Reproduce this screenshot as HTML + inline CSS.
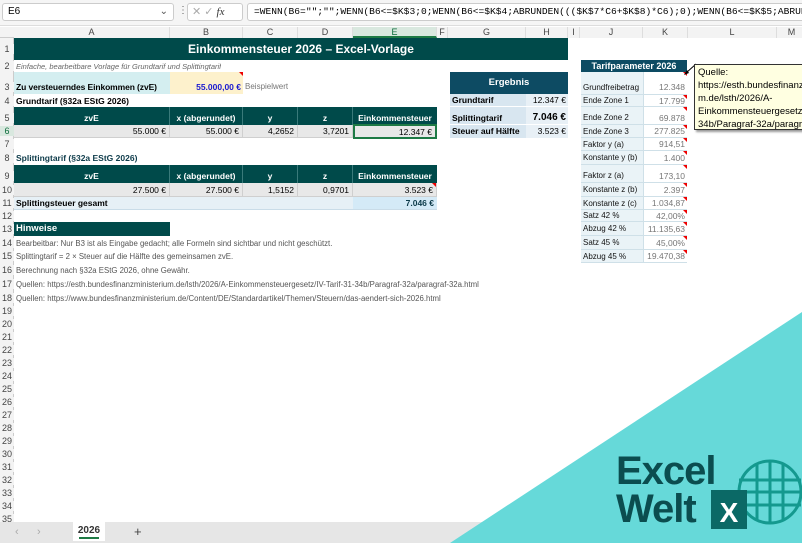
<!DOCTYPE html>
<html><head><meta charset="utf-8"><style>
*{margin:0;padding:0;box-sizing:border-box}
body{width:802px;height:543px;overflow:hidden;background:#fff;font-family:"Liberation Sans",sans-serif;font-size:8.5px;color:#000;position:relative}
.a{position:absolute;white-space:nowrap;overflow:hidden}
.ch{position:absolute;top:27px;height:11px;font-size:9px;color:#444;text-align:center;line-height:11px;border-right:1px solid #ddd;background:#f3f3f3}
.rh{position:absolute;left:0;width:14px;font-size:9px;color:#444;text-align:center;background:#f3f3f3}
.dk{background:#004a4a;color:#fff;font-weight:bold;text-align:center;font-size:8.5px}
.bl{background:#0d4b63;color:#fff;font-weight:bold;text-align:center}
.g{background:#e8e8e8;border-right:1px solid #cfcfcf;border-bottom:1px solid #cfcfcf;text-align:right;padding-right:3px}
.tri{position:absolute;width:0;height:0;border-top:4px solid #e00;border-left:4px solid transparent}
.j{background:#eaf3f7;border-bottom:1px solid #cfe0e8;padding-left:2px;color:#111}
.k{background:#fff;border-bottom:1px solid #cfe0e8;text-align:right;padding-right:2px;color:#777;border-left:1px solid #cfe0e8}
.n{color:#555;font-size:7.8px}
</style></head><body>
<div class="a" style="left:0;top:0;width:802px;height:26px;background:#f5f5f5;border-bottom:1px solid #ddd"></div>
<div class="a" style="left:2px;top:3px;width:172px;height:18px;background:#fff;border:1px solid #ccc;border-radius:3px;font-size:10px;line-height:16px;padding-left:5px">E6<span style="position:absolute;right:5px;color:#555">⌄</span></div>
<div class="a" style="left:178px;top:5px;font-size:10px;color:#666">⋮</div>
<div class="a" style="left:187px;top:3px;width:56px;height:18px;background:#fff;border:1px solid #ccc;border-radius:3px;font-size:11px;line-height:16px;color:#aaa;padding-left:4px">✕ ✓ <i style="color:#333;font-family:'Liberation Serif',serif">fx</i></div>
<div class="a" style="left:247px;top:3px;width:560px;height:18px;background:#fff;border:1px solid #ccc;border-radius:3px;font-family:'Liberation Mono',monospace;font-size:9.6px;line-height:16px;padding-left:6px">=WENN(B6="";"";WENN(B6&lt;=$K$3;0;WENN(B6&lt;=$K$4;ABRUNDEN((($K$7*C6+$K$8)*C6);0);WENN(B6&lt;=$K$5;ABRUNDEN((($K$</div>
<div class="a" style="left:0;top:27px;width:802px;height:11px;background:#f3f3f3;border-bottom:1px solid #ccc"></div>
<div class="ch" style="left:14px;width:156px">A</div><div class="ch" style="left:170px;width:73px">B</div><div class="ch" style="left:243px;width:55px">C</div><div class="ch" style="left:298px;width:55px">D</div><div class="ch" style="left:353px;width:84px;background:#d9e8df;color:#0a6b3a;border-bottom:2px solid #1e7a45">E</div><div class="ch" style="left:437px;width:11px">F</div><div class="ch" style="left:448px;width:78px">G</div><div class="ch" style="left:526px;width:42px">H</div><div class="ch" style="left:568px;width:12px">I</div><div class="ch" style="left:580px;width:63px">J</div><div class="ch" style="left:643px;width:45px">K</div><div class="ch" style="left:688px;width:89px">L</div><div class="ch" style="left:777px;width:30px">M</div>
<div class="a" style="left:0;top:38px;width:14px;height:485px;background:#f3f3f3;border-right:1px solid #ccc"></div>
<div class="rh" style="top:44px">1</div><div class="rh" style="top:61px">2</div><div class="rh" style="top:82px">3</div><div class="rh" style="top:96px">4</div><div class="rh" style="top:113px">5</div><div class="rh" style="top:126px;color:#0a6b3a;background:#d9e8df">6</div><div class="rh" style="top:139px">7</div><div class="rh" style="top:153px">8</div><div class="rh" style="top:171px">9</div><div class="rh" style="top:185px">10</div><div class="rh" style="top:198px">11</div><div class="rh" style="top:211px">12</div><div class="rh" style="top:224px">13</div><div class="rh" style="top:238px">14</div><div class="rh" style="top:251px">15</div><div class="rh" style="top:265px">16</div><div class="rh" style="top:279px">17</div><div class="rh" style="top:293px">18</div>
<div class="rh" style="top:306px">19</div><div class="rh" style="top:319px">20</div><div class="rh" style="top:332px">21</div><div class="rh" style="top:345px">22</div><div class="rh" style="top:358px">23</div><div class="rh" style="top:371px">24</div><div class="rh" style="top:384px">25</div><div class="rh" style="top:397px">26</div><div class="rh" style="top:410px">27</div><div class="rh" style="top:423px">28</div><div class="rh" style="top:436px">29</div><div class="rh" style="top:449px">30</div><div class="rh" style="top:462px">31</div><div class="rh" style="top:475px">32</div><div class="rh" style="top:488px">33</div><div class="rh" style="top:501px">34</div><div class="rh" style="top:514px">35</div>
<div class="a dk" style="left:14px;top:38px;width:554px;height:22px;font-size:12px;line-height:22px;padding-left:20px">Einkommensteuer 2026 – Excel-Vorlage</div>
<div class="a" style="left:16px;top:61px;font-size:7.5px;font-style:italic;color:#666;line-height:11px">Einfache, bearbeitbare Vorlage für Grundtarif und Splittingtarif</div>
<div class="a" style="left:14px;top:72px;width:156px;height:22px;background:#d4eef0;font-weight:bold;line-height:30px;padding-left:2px;font-size:8.5px;letter-spacing:-0.1px">Zu versteuerndes Einkommen (zvE)</div>
<div class="a" style="left:170px;top:72px;width:73px;height:22px;background:#fdf1cc;color:#1a1ad0;font-weight:bold;text-align:right;line-height:30px;padding-right:2px">55.000,00 €</div>
<div class="tri" style="left:239px;top:72px"></div>
<div class="a" style="left:245px;top:82px;color:#777;font-size:8px">Beispielwert</div>
<div class="a" style="left:16px;top:96px;font-weight:bold">Grundtarif (§32a EStG 2026)</div>
<div class="a dk" style="left:14px;top:107px;width:156px;height:18px;line-height:22px;border-right:1px solid #3a7a7a">zvE</div>
<div class="a dk" style="left:170px;top:107px;width:73px;height:18px;line-height:22px;border-right:1px solid #3a7a7a">x (abgerundet)</div>
<div class="a dk" style="left:243px;top:107px;width:55px;height:18px;line-height:22px;border-right:1px solid #3a7a7a">y</div>
<div class="a dk" style="left:298px;top:107px;width:55px;height:18px;line-height:22px;border-right:1px solid #3a7a7a">z</div>
<div class="a dk" style="left:353px;top:107px;width:84px;height:18px;line-height:22px">Einkommensteuer</div>
<div class="a g" style="left:14px;top:125px;width:156px;height:13px;line-height:13px">55.000 €</div>
<div class="a g" style="left:170px;top:125px;width:73px;height:13px;line-height:13px">55.000 €</div>
<div class="a g" style="left:243px;top:125px;width:55px;height:13px;line-height:13px">4,2652</div>
<div class="a g" style="left:298px;top:125px;width:55px;height:13px;line-height:13px">3,7201</div>
<div class="a g" style="left:353px;top:124px;width:84px;height:15px;line-height:13px;border:2px solid #1e7a45">12.347 €</div>
<div class="a" style="left:16px;top:153px;font-weight:bold;color:#0d3b4a">Splittingtarif (§32a EStG 2026)</div>
<div class="a dk" style="left:14px;top:165px;width:156px;height:18px;line-height:22px;border-right:1px solid #3a7a7a">zvE</div>
<div class="a dk" style="left:170px;top:165px;width:73px;height:18px;line-height:22px;border-right:1px solid #3a7a7a">x (abgerundet)</div>
<div class="a dk" style="left:243px;top:165px;width:55px;height:18px;line-height:22px;border-right:1px solid #3a7a7a">y</div>
<div class="a dk" style="left:298px;top:165px;width:55px;height:18px;line-height:22px;border-right:1px solid #3a7a7a">z</div>
<div class="a dk" style="left:353px;top:165px;width:84px;height:18px;line-height:22px">Einkommensteuer</div>
<div class="a g" style="left:14px;top:183px;width:156px;height:14px;line-height:14px">27.500 €</div>
<div class="a g" style="left:170px;top:183px;width:73px;height:14px;line-height:14px">27.500 €</div>
<div class="a g" style="left:243px;top:183px;width:55px;height:14px;line-height:14px">1,5152</div>
<div class="a g" style="left:298px;top:183px;width:55px;height:14px;line-height:14px">0,9701</div>
<div class="a g" style="left:353px;top:183px;width:84px;height:14px;line-height:14px">3.523 €</div>
<div class="tri" style="left:432px;top:183px"></div>
<div class="a" style="left:14px;top:197px;width:339px;height:13px;background:#e6f0f6;border-bottom:1px solid #c9dce8;font-weight:bold;line-height:13px;padding-left:2px">Splittingsteuer gesamt</div>
<div class="a" style="left:353px;top:197px;width:84px;height:13px;background:#d4eaf7;border-bottom:1px solid #c9dce8;font-weight:bold;color:#0d3b4a;text-align:right;line-height:13px;padding-right:3px">7.046 €</div>
<div class="a dk" style="left:14px;top:222px;width:156px;height:14px;text-align:left;padding-left:2px;line-height:14px;font-size:9.5px">Hinweise</div>
<div class="a n" style="left:16px;top:239px">Bearbeitbar: Nur B3 ist als Eingabe gedacht; alle Formeln sind sichtbar und nicht geschützt.</div>
<div class="a n" style="left:16px;top:252px">Splittingtarif = 2 × Steuer auf die Hälfte des gemeinsamen zvE.</div>
<div class="a n" style="left:16px;top:266px">Berechnung nach §32a EStG 2026, ohne Gewähr.</div>
<div class="a n" style="left:16px;top:280px">Quellen: https://esth.bundesfinanzministerium.de/lsth/2026/A-Einkommensteuergesetz/IV-Tarif-31-34b/Paragraf-32a/paragraf-32a.html</div>
<div class="a n" style="left:16px;top:294px">Quellen: https://www.bundesfinanzministerium.de/Content/DE/Standardartikel/Themen/Steuern/das-aendert-sich-2026.html</div>
<div class="a bl" style="left:450px;top:72px;width:118px;height:22px;line-height:22px;font-size:9.5px">Ergebnis</div>
<div class="a" style="left:450px;top:94px;width:76px;height:13px;background:#d8e6f0;font-weight:bold;line-height:13px;padding-left:2px;border-bottom:1px solid #fff">Grundtarif</div>
<div class="a" style="left:526px;top:94px;width:42px;height:13px;background:#e8f0f6;line-height:13px;text-align:right;padding-right:2px;border-bottom:1px solid #fff">12.347 €</div>
<div class="a" style="left:450px;top:107px;width:76px;height:18px;background:#d8e6f0;font-weight:bold;line-height:22px;padding-left:2px;border-bottom:1px solid #fff">Splittingtarif</div>
<div class="a" style="left:526px;top:107px;width:42px;height:18px;background:#e8f0f6;line-height:22px;text-align:right;padding-right:2px;font-weight:bold;font-size:10px;border-bottom:1px solid #fff">7.046 €</div>
<div class="a" style="left:450px;top:125px;width:76px;height:13px;background:#d8e6f0;font-weight:bold;line-height:13px;padding-left:2px">Steuer auf Hälfte</div>
<div class="a" style="left:526px;top:125px;width:42px;height:13px;background:#e8f0f6;line-height:13px;text-align:right;padding-right:2px">3.523 €</div>
<div class="a bl" style="left:581px;top:60px;width:106px;height:12px;line-height:12px;font-size:9px">Tarifparameter 2026</div>
<div class="a j" style="left:581px;top:72px;width:63px;height:23px;line-height:31px;font-size:8px">Grundfreibetrag</div><div class="a k" style="left:643px;top:72px;width:44px;height:23px;line-height:31px">12.348</div>
<div class="a j" style="left:581px;top:95px;width:63px;height:12px;line-height:12px;font-size:8px">Ende Zone 1</div><div class="a k" style="left:643px;top:95px;width:44px;height:12px;line-height:12px">17.799</div>
<div class="a j" style="left:581px;top:107px;width:63px;height:18px;line-height:22px;font-size:8px">Ende Zone 2</div><div class="a k" style="left:643px;top:107px;width:44px;height:18px;line-height:22px">69.878</div>
<div class="a j" style="left:581px;top:125px;width:63px;height:13px;line-height:13px;font-size:8px">Ende Zone 3</div><div class="a k" style="left:643px;top:125px;width:44px;height:13px;line-height:13px">277.825</div>
<div class="a j" style="left:581px;top:138px;width:63px;height:13px;line-height:13px;font-size:8px">Faktor y (a)</div><div class="a k" style="left:643px;top:138px;width:44px;height:13px;line-height:13px">914,51</div>
<div class="a j" style="left:581px;top:151px;width:63px;height:14px;line-height:14px;font-size:8px">Konstante y (b)</div><div class="a k" style="left:643px;top:151px;width:44px;height:14px;line-height:14px">1.400</div>
<div class="a j" style="left:581px;top:165px;width:63px;height:18px;line-height:22px;font-size:8px">Faktor z (a)</div><div class="a k" style="left:643px;top:165px;width:44px;height:18px;line-height:22px">173,10</div>
<div class="a j" style="left:581px;top:183px;width:63px;height:14px;line-height:14px;font-size:8px">Konstante z (b)</div><div class="a k" style="left:643px;top:183px;width:44px;height:14px;line-height:14px">2.397</div>
<div class="a j" style="left:581px;top:197px;width:63px;height:13px;line-height:13px;font-size:8px">Konstante z (c)</div><div class="a k" style="left:643px;top:197px;width:44px;height:13px;line-height:13px">1.034,87</div>
<div class="a j" style="left:581px;top:210px;width:63px;height:12px;line-height:12px;font-size:8px">Satz 42 %</div><div class="a k" style="left:643px;top:210px;width:44px;height:12px;line-height:12px">42,00%</div>
<div class="a j" style="left:581px;top:222px;width:63px;height:14px;line-height:14px;font-size:8px">Abzug 42 %</div><div class="a k" style="left:643px;top:222px;width:44px;height:14px;line-height:14px">11.135,63</div>
<div class="a j" style="left:581px;top:236px;width:63px;height:14px;line-height:14px;font-size:8px">Satz 45 %</div><div class="a k" style="left:643px;top:236px;width:44px;height:14px;line-height:14px">45,00%</div>
<div class="a j" style="left:581px;top:250px;width:63px;height:13px;line-height:13px;font-size:8px">Abzug 45 %</div><div class="a k" style="left:643px;top:250px;width:44px;height:13px;line-height:13px">19.470,38</div>
<div class="tri" style="left:683px;top:72px"></div><div class="tri" style="left:683px;top:95px"></div><div class="tri" style="left:683px;top:107px"></div><div class="tri" style="left:683px;top:125px"></div><div class="tri" style="left:683px;top:138px"></div><div class="tri" style="left:683px;top:151px"></div><div class="tri" style="left:683px;top:165px"></div><div class="tri" style="left:683px;top:183px"></div><div class="tri" style="left:683px;top:197px"></div><div class="tri" style="left:683px;top:210px"></div><div class="tri" style="left:683px;top:222px"></div><div class="tri" style="left:683px;top:236px"></div><div class="tri" style="left:683px;top:250px"></div>
<svg class="a" style="left:680px;top:60px" width="20" height="20"><line x1="6" y1="13" x2="16" y2="4" stroke="#000" stroke-width="1"/><polygon points="4,15 9,13 7,10" fill="#000"/></svg>
<div class="a" style="left:694px;top:64px;width:120px;height:66px;background:#ffffe1;border:1px solid #333;box-shadow:2px 2px 2px #999;font-size:9.5px;line-height:13px;padding:1px 3px">Quelle:<br>https://esth.bundesfinanz<br>m.de/lsth/2026/A-<br>Einkommensteuergesetz/<br>34b/Paragraf-32a/paragraf</div>
<div class="a" style="left:0;top:522px;width:802px;height:21px;background:#e6e6e6"></div>
<div class="a" style="left:15px;top:526px;color:#aaa;font-size:11px">‹</div><div class="a" style="left:37px;top:526px;color:#aaa;font-size:11px">›</div>
<div class="a" style="left:73px;top:522px;width:32px;height:19px;background:#fff;font-weight:bold;font-size:10px;text-align:center;line-height:17px;color:#333">2026<div style="position:absolute;left:6px;right:6px;bottom:2px;height:2px;background:#1e7a45"></div></div>
<div class="a" style="left:134px;top:524px;font-size:13px;color:#444">+</div>
<svg class="a" style="left:0;top:0" width="802" height="543">
<polygon points="450,543 802,312 802,543" fill="#66d9d9"/>
<g fill="none" stroke="#14998f" stroke-width="3">
<circle cx="770" cy="492" r="31"/>
<line x1="739" y1="480" x2="801" y2="480"/><line x1="739" y1="492" x2="801" y2="492"/><line x1="739" y1="505" x2="801" y2="505"/>
<line x1="757" y1="463" x2="757" y2="521"/><line x1="770" y1="461" x2="770" y2="523"/><line x1="783" y1="463" x2="783" y2="521"/>
</g>
<rect x="711" y="490" width="36" height="39" fill="#0b6966"/>
<text x="729" y="522" text-anchor="middle" font-family="Liberation Sans" font-weight="bold" font-size="28" fill="#fff">X</text>
<text x="616" y="484" font-family="Liberation Sans" font-weight="bold" font-size="40" fill="#0b4d4f" letter-spacing="-1">Excel</text>
<text x="616" y="522" font-family="Liberation Sans" font-weight="bold" font-size="40" fill="#0b4d4f" letter-spacing="-1">Welt</text>
</svg>
</body></html>
